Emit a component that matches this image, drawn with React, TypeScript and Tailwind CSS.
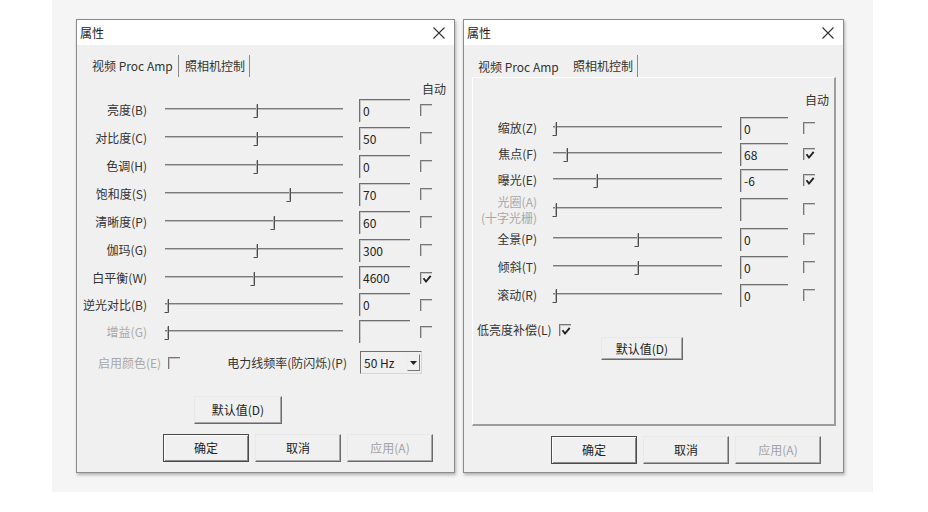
import React from "react";

function Check({ checked }: { checked?: boolean }) {
  return (
    <div className="relative w-[12px] h-[12px] shrink-0 border-t border-l border-[#777] shadow-[inset_1px_1px_0_#c6c6c6]">
      {checked && (
        <svg className="absolute left-[1px] top-[1px]" width="10" height="10" viewBox="0 0 10 10">
          <path d="M1.5 4.2 L4 7.5 L8.7 1.8" fill="none" stroke="#222" strokeWidth="1.9" />
        </svg>
      )}
    </div>
  );
}

function Slider({ w, pos }: { w: string; pos: number }) {
  return (
    <div className={"relative h-[16px] shrink-0 pt-[6px] " + w}>
      <div className="h-px bg-[#7a7a7a]" />
      <div className="h-px bg-[#bdbdbd]" />
      <svg className="absolute top-[2px]" style={{ left: pos - 4 }} width="6" height="15" viewBox="0 0 6 15">
        <path d="M4.5 0 V13.5 H0.5" fill="none" stroke="#4d4d4d" strokeWidth="1" />
        <path d="M3.5 0.5 V12.5" fill="none" stroke="#b0b0b0" strokeWidth="1" />
      </svg>
    </div>
  );
}

function Field({ value, w }: { value: string; w: string }) {
  return (
    <div
      className={
        "h-[23px] shrink-0 border-t border-l border-[#6f6f6f] shadow-[inset_1px_1px_0_#c8c8c8] pl-[3px] leading-[21px] text-[#222] " +
        w
      }
    >
      {value}
    </div>
  );
}

function Btn({
  children,
  cls,
  def,
  disabled,
}: {
  children: React.ReactNode;
  cls: string;
  def?: boolean;
  disabled?: boolean;
}) {
  return (
    <div
      className={
        "flex items-center justify-center shrink-0 bg-[#f0f0f0] " +
        (def
          ? "border border-[#4a4a4a] shadow-[inset_1px_1px_0_#fff,inset_-1px_-1px_0_#8a8a8a] "
          : "border border-t-[#e8e8e8] border-l-[#e8e8e8] border-r-[#6a6a6a] border-b-[#6a6a6a] shadow-[inset_-1px_-1px_0_#a8a8a8] ") +
        (disabled ? "text-[#a3a3a3] " : "text-[#222] ") +
        cls
      }
    >
      {children}
    </div>
  );
}

function Frame({ w, children }: { w: string; children: React.ReactNode }) {
  return (
    <div
      className={
        "h-[454px] shrink-0 border border-[#8c8c8c] bg-[#f0f0f0] shadow-[1px_2px_3px_rgba(0,0,0,0.28)] flex flex-col " +
        w
      }
    >
      <div className="h-[25px] shrink-0 bg-white flex items-center pl-[3px] pr-[9px]">
        <span className="flex-1 text-[#222] leading-[25px]">属性</span>
        <svg width="12" height="12" viewBox="0 0 12 12">
          <path d="M0.5 0.5 L11.5 11.5 M11.5 0.5 L0.5 11.5" stroke="#333" strokeWidth="1.1" fill="none" />
        </svg>
      </div>
      {children}
    </div>
  );
}

type Row = { label: string; pos: number; value: string; checked?: boolean; disabled?: boolean; h: string };

const leftRows: Row[] = [
  { label: "亮度(B)", pos: 92, value: "0", h: "h-[28px]" },
  { label: "对比度(C)", pos: 92, value: "50", h: "h-[28px]" },
  { label: "色调(H)", pos: 92, value: "0", h: "h-[28px]" },
  { label: "饱和度(S)", pos: 125, value: "70", h: "h-[28px]" },
  { label: "清晰度(P)", pos: 109, value: "60", h: "h-[28px]" },
  { label: "伽玛(G)", pos: 92, value: "300", h: "h-[28px]" },
  { label: "白平衡(W)", pos: 89, value: "4600", checked: true, h: "h-[27px]" },
  { label: "逆光对比(B)", pos: 3, value: "0", h: "h-[27px]" },
  { label: "增益(G)", pos: 3, value: "", disabled: true, h: "h-[27px]" },
];

const rightRows: Row[] = [
  { label: "缩放(Z)", pos: 3, value: "0", h: "h-[26px]" },
  { label: "焦点(F)", pos: 14, value: "68", checked: true, h: "h-[26px]" },
  { label: "曝光(E)", pos: 44, value: "-6", checked: true, h: "h-[26px]" },
  { label: "光圈(A)", pos: 3, value: "", disabled: true, h: "h-[32px]" },
  { label: "全景(P)", pos: 85, value: "0", h: "h-[28px]" },
  { label: "倾斜(T)", pos: 85, value: "0", h: "h-[28px]" },
  { label: "滚动(R)", pos: 3, value: "0", h: "h-[28px]" },
];

function LeftDialog() {
  return (
    <Frame w="w-[379px]">
      <div className="mt-[10px] ml-[7px] flex h-[22px] leading-[22px] text-[#333]">
        <div className="w-[95px] pl-[8px] border-r border-[#8a8a8a]">视频 Proc Amp</div>
        <div className="w-[71px] pl-[6px] border-r border-[#8a8a8a]">照相机控制</div>
      </div>
      <div className="mt-[5px] h-[14px] leading-[14px] flex justify-end pr-[8px] text-[#333]">自动</div>
      {leftRows.map((r) => (
        <div key={r.label} className={"flex items-center " + r.h}>
          <div className={"w-[70px] text-right shrink-0 " + (r.disabled ? "text-[#a8a8a8]" : "text-[#333]")}>
            {r.label}
          </div>
          <div className="ml-[18px]">
            <Slider w="w-[178px]" pos={r.pos} />
          </div>
          <div className="ml-[16px]">
            <Field value={r.value} w="w-[51px]" />
          </div>
          <div className="ml-[10px]">
            <Check checked={r.checked} />
          </div>
        </div>
      ))}
      <div className="mt-[6px] h-[23px] flex items-center pl-[21px] pr-[32px]">
        <span className="text-[#a8a8a8]">启用颜色(E)</span>
        <div className="ml-[7px]">
          <Check />
        </div>
        <div className="flex-1" />
        <span className="text-[#333]">电力线频率(防闪烁)(P)</span>
        <div className="ml-[13px] w-[62px] h-[23px] border border-t-[#6f6f6f] border-l-[#6f6f6f] border-r-[#d8d8d8] border-b-[#d8d8d8] flex items-center justify-between pl-[3px] pr-[1px] text-[#222]">
          <span>50 Hz</span>
          <div className="w-[13px] h-[17px] border border-t-[#eee] border-l-[#eee] border-r-[#777] border-b-[#777] flex items-center justify-center">
            <svg width="7" height="4" viewBox="0 0 7 4">
              <path d="M0 0 H7 L3.5 4 Z" fill="#222" />
            </svg>
          </div>
        </div>
      </div>
      <div className="mt-[22px] ml-[117px]">
        <Btn cls="w-[88px] h-[28px]">默认值(D)</Btn>
      </div>
      <div className="mt-[10px] flex justify-end gap-[6px] pr-[21px]">
        <Btn cls="w-[86px] h-[28px]" def>
          确定
        </Btn>
        <Btn cls="w-[86px] h-[28px]">取消</Btn>
        <Btn cls="w-[86px] h-[28px]" disabled>
          应用(A)
        </Btn>
      </div>
    </Frame>
  );
}

function RightDialog() {
  return (
    <Frame w="w-[381px]">
      <div className="mt-[10px] ml-[6px] flex h-[22px] leading-[22px] text-[#333]">
        <div className="w-[96px] pl-[8px] pt-[1px]">视频 Proc Amp</div>
        <div className="w-[72px] pl-[7px] border-r border-[#8a8a8a]">照相机控制</div>
      </div>
      <div className="ml-[8px] w-[364px] h-[349px] border-t border-l border-r-2 border-b-2 border-t-white border-l-white border-r-[#9d9d9d] border-b-[#9d9d9d] flex flex-col">
        <div className="mt-[15px] h-[14px] leading-[14px] flex justify-end pr-[5px] text-[#333]">自动</div>
        <div className="mt-[8px]" />
        {rightRows.map((r) => (
          <div key={r.label} className={"flex items-center " + r.h}>
            <div
              className={
                "w-[64px] text-right shrink-0 " +
                (r.disabled ? "text-[#a8a8a8] leading-[16px] pt-[2px]" : "text-[#333]")
              }
            >
              {r.disabled ? (
                <>
                  <div>{r.label}</div>
                  <div>(十字光栅)</div>
                </>
              ) : (
                r.label
              )}
            </div>
            <div className="ml-[16px]">
              <Slider w="w-[169px]" pos={r.pos} />
            </div>
            <div className="ml-[18px]">
              <Field value={r.value} w="w-[48px]" />
            </div>
            <div className="ml-[15px]">
              <Check checked={r.checked} />
            </div>
          </div>
        ))}
        <div className="mt-[13px] h-[15px] flex items-center pl-[4px] text-[#333]">
          <span>低亮度补偿(L)</span>
          <div className="ml-[7px]">
            <Check checked />
          </div>
        </div>
        <div className="ml-[128px]">
          <Btn cls="w-[82px] h-[23px]">默认值(D)</Btn>
        </div>
      </div>
      <div className="mt-[10px] flex justify-end gap-[6px] pr-[22px]">
        <Btn cls="w-[86px] h-[28px]" def>
          确定
        </Btn>
        <Btn cls="w-[86px] h-[28px]">取消</Btn>
        <Btn cls="w-[86px] h-[28px]" disabled>
          应用(A)
        </Btn>
      </div>
    </Frame>
  );
}

export default function App() {
  return (
    <div className="w-[928px] h-[512px] bg-white font-['Noto_Sans_CJK_SC',sans-serif] text-[12px] overflow-hidden">
      <div className="ml-[52px] w-[821px] h-[492px] bg-[#f5f5f5] pl-[24px] pt-[19px] flex gap-[8px] items-start">
        <LeftDialog />
        <RightDialog />
      </div>
    </div>
  );
}
